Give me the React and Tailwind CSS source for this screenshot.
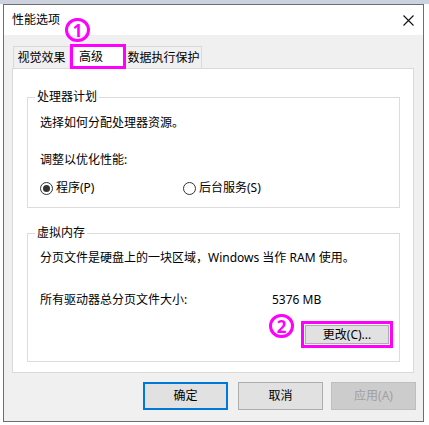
import React from 'react';

const Radio = ({ checked, label, className = '' }) => (
  <label className={`flex items-center ${className}`}>
    <span className="flex items-center justify-center w-[13px] h-[13px] rounded-full border border-[#333333] bg-white">
      {checked && <span className="w-[7px] h-[7px] rounded-full bg-[#333333]" />}
    </span>
    <span className="ml-[3px]">{label}</span>
  </label>
);

const Marker = ({ n, className = '' }) => (
  <div
    className={`absolute flex items-center justify-center w-[25px] h-[24px] rounded-full border-[3px] border-[#ff00ff] text-[#ff00ff] text-[17px] leading-none font-bold ${className}`}
  >
    {n}
  </div>
);

export default function App() {
  return (
    <div className="w-[429px] h-[425px] bg-white overflow-hidden text-[12px] leading-[16px] text-black font-['Noto_Sans','Noto_Sans_CJK_SC',sans-serif]">
      {/* Desktop strip behind the dialog */}
      <div className="h-[4px] bg-[#ccd3de]" />

      {/* Dialog window */}
      <div className="ml-[3px] w-[421px] h-[418px] border border-[#6e6e6e] flex flex-col">
        {/* Title bar */}
        <div className="h-[30px] bg-white flex items-center justify-between pl-[8px] pr-[8px]">
          <span>性能选项</span>
          <svg width="11" height="11" viewBox="0 0 11 11" className="mr-[1px]">
            <path d="M0.5 0.5 L10.5 10.5 M10.5 0.5 L0.5 10.5" stroke="#111" strokeWidth="1.1" />
          </svg>
        </div>

        {/* Body */}
        <div className="flex-1 bg-[#f0f0f0] pl-[8px] pr-[9px] pt-[9px]">
          {/* Tabs */}
          <div className="flex items-end h-[24px] pl-[1px] relative z-10">
            <div className="w-[57px] h-[22px] border border-b-0 border-[#d9d9d9] bg-[#f0f0f0] flex items-center justify-center">
              视觉效果
            </div>
            <div className="relative w-[56px] h-[25px] -mb-[1px] border-[3px] border-[#ff00ff] bg-white flex items-center pl-[6px]">
              高级
              <Marker n="1" className="-left-[8px] -top-[29px]" />
            </div>
            <div className="w-[76px] h-[22px] border border-b-0 border-l-0 border-[#d9d9d9] bg-[#f0f0f0] flex items-center justify-center">
              数据执行保护
            </div>
          </div>

          {/* Tab panel */}
          <div className="h-[305px] bg-white border border-[#d9d9d9] pl-[14px] pr-[13px] pt-[20px]">
            <fieldset className="border border-[#dcdcdc] pl-[12px] pb-[11px]">
              <legend className="ml-[-5px] px-[2px] leading-[16px]">处理器计划</legend>
              <div className="mt-[10px]">选择如何分配处理器资源。</div>
              <div className="mt-[21px]">调整以优化性能:</div>
              <div className="mt-[12px] flex items-center">
                <Radio checked label="程序(P)" className="w-[143px]" />
                <Radio label="后台服务(S)" />
              </div>
            </fieldset>

            <fieldset className="mt-[17px] border border-[#dcdcdc] pl-[12px] pr-[6px] pb-[13px]">
              <legend className="ml-[-5px] px-[2px] leading-[16px]">虚拟内存</legend>
              <div className="mt-[9px]">分页文件是硬盘上的一块区域，Windows 当作 RAM 使用。</div>
              <div className="mt-[26px] flex">
                <span className="w-[232px]">所有驱动器总分页文件大小:</span>
                <span>5376 MB</span>
              </div>
              <div className="mt-[13px] flex justify-end">
                <div className="relative w-[92px] h-[27px] border-[3px] border-[#ff00ff] p-[1px]">
                  <button className="w-full h-full bg-[#e1e1e1] border border-[#adadad] flex items-center justify-center">
                    更改(C)...
                  </button>
                  <Marker n="2" className="-left-[35px] -top-[10px]" />
                </div>
              </div>
            </fieldset>
          </div>

          {/* Dialog buttons */}
          <div className="mt-[9px] flex justify-end pr-[-0px]">
            <button className="w-[85px] h-[28px] bg-[#e1e1e1] border-2 border-[#0078d7] flex items-center justify-center">
              确定
            </button>
            <button className="ml-[10px] w-[85px] h-[28px] bg-[#e1e1e1] border border-[#adadad] flex items-center justify-center">
              取消
            </button>
            <button className="ml-[8px] mr-[-2px] w-[85px] h-[28px] bg-[#cccccc] border border-[#bfbfbf] text-[#a0a0a0] flex items-center justify-center">
              应用(A)
            </button>
          </div>
        </div>
      </div>
    </div>
  );
}
